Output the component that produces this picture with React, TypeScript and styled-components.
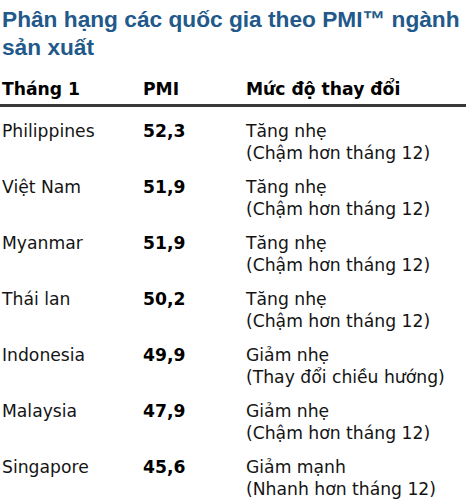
import { createGlobalStyle } from 'styled-components';
import styled from 'styled-components';

const GlobalStyle = createGlobalStyle`
  html, body {
    margin: 0;
    padding: 0;
    background: #ffffff;
  }
`;

const Page = styled.div`
  width: 466px;
  padding: 5px 0 0 2px;
  box-sizing: border-box;
`;

const Title = styled.h2`
  margin: 0;
  font-family: 'Liberation Sans', Arial, sans-serif;
  font-weight: 700;
  font-size: 22.7px;
  line-height: 28px;
  color: #22598a;
`;

const Table = styled.div`
  margin: 17px 0 0 -2px;
  padding-left: 2px;
  font-family: 'DejaVu Sans', Verdana, sans-serif;
  font-size: 17.2px;
  color: #141414;
`;

const Row = styled.div<{ $head?: boolean }>`
  display: grid;
  grid-template-columns: 141px 103px 1fr;
  align-items: start;
  font-weight: ${(p) => (p.$head ? 700 : 400)};
  color: ${(p) => (p.$head ? '#000000' : 'inherit')};
  line-height: 22px;
  height: ${(p) => (p.$head ? 'auto' : '56px')};
  padding-bottom: ${(p) => (p.$head ? '4px' : '0')};
  border-bottom: ${(p) => (p.$head ? '3px solid #383838' : 'none')};
  margin: ${(p) => (p.$head ? '0 0 13px -2px' : '0')};
  padding-left: ${(p) => (p.$head ? '2px' : '0')};
`;

const Value = styled.span`
  font-weight: 700;
  color: #000000;
`;

const Change = styled.div`
  display: flex;
  flex-direction: column;
`;

const rows = [
  { country: 'Philippines', pmi: '52,3', trend: 'Tăng nhẹ', note: '(Chậm hơn tháng 12)' },
  { country: 'Việt Nam', pmi: '51,9', trend: 'Tăng nhẹ', note: '(Chậm hơn tháng 12)' },
  { country: 'Myanmar', pmi: '51,9', trend: 'Tăng nhẹ', note: '(Chậm hơn tháng 12)' },
  { country: 'Thái lan', pmi: '50,2', trend: 'Tăng nhẹ', note: '(Chậm hơn tháng 12)' },
  { country: 'Indonesia', pmi: '49,9', trend: 'Giảm nhẹ', note: '(Thay đổi chiều hướng)' },
  { country: 'Malaysia', pmi: '47,9', trend: 'Giảm nhẹ', note: '(Chậm hơn tháng 12)' },
  { country: 'Singapore', pmi: '45,6', trend: 'Giảm mạnh', note: '(Nhanh hơn tháng 12)' },
];

export default function App() {
  return (
    <Page>
      <GlobalStyle />
      <Title>Phân hạng các quốc gia theo PMI™ ngành sản xuất</Title>
      <Table>
        <Row $head>
          <span>Tháng 1</span>
          <span>PMI</span>
          <span>Mức độ thay đổi</span>
        </Row>
        {rows.map((r) => (
          <Row key={r.country}>
            <span>{r.country}</span>
            <Value>{r.pmi}</Value>
            <Change>
              <span>{r.trend}</span>
              <span>{r.note}</span>
            </Change>
          </Row>
        ))}
      </Table>
    </Page>
  );
}
